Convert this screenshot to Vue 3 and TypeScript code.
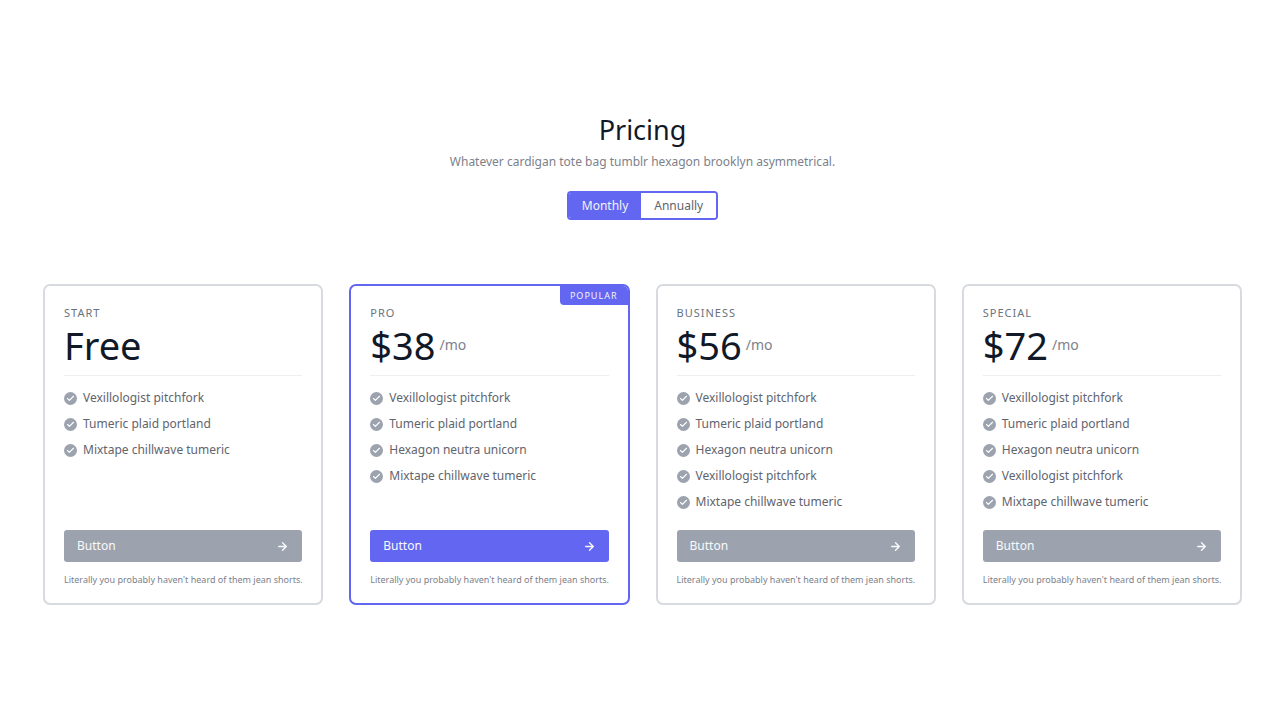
<script setup lang="ts">
import { ref } from 'vue'

interface Plan {
  name: string
  price: string
  period?: string
  popular?: boolean
  features: string[]
}

const cycle = ref<'Monthly' | 'Annually'>('Monthly')
const cycles = ['Monthly', 'Annually'] as const

const pitchfork = 'Vexillologist pitchfork'
const plaid = 'Tumeric plaid portland'
const hexagon = 'Hexagon neutra unicorn'
const mixtape = 'Mixtape chillwave tumeric'

const plans: Plan[] = [
  { name: 'START', price: 'Free', features: [pitchfork, plaid, mixtape] },
  { name: 'PRO', price: '$38', period: '/mo', popular: true, features: [pitchfork, plaid, hexagon, mixtape] },
  { name: 'BUSINESS', price: '$56', period: '/mo', features: [pitchfork, plaid, hexagon, pitchfork, mixtape] },
  { name: 'SPECIAL', price: '$72', period: '/mo', features: [pitchfork, plaid, hexagon, pitchfork, mixtape] },
]
</script>

<template>
  <section class="pricing">
    <header class="intro">
      <h1>Pricing</h1>
      <p>Whatever cardigan tote bag tumblr hexagon brooklyn asymmetrical.</p>
      <div class="toggle" role="group" aria-label="Billing cycle">
        <button
          v-for="item in cycles"
          :key="item"
          type="button"
          :class="{ active: cycle === item }"
          :aria-pressed="cycle === item"
          @click="cycle = item"
        >{{ item }}</button>
      </div>
    </header>

    <div class="plans">
      <article v-for="plan in plans" :key="plan.name" class="card" :class="{ popular: plan.popular }">
        <span v-if="plan.popular" class="badge">POPULAR</span>
        <h2>{{ plan.name }}</h2>
        <div class="price">
          <span class="amount">{{ plan.price }}</span>
          <span v-if="plan.period" class="period">{{ plan.period }}</span>
        </div>
        <ul>
          <li v-for="(feature, index) in plan.features" :key="index">
            <span class="check">
              <svg viewBox="0 0 24 24" fill="none" stroke="currentColor" stroke-width="3" stroke-linecap="round" stroke-linejoin="round" aria-hidden="true">
                <path d="M20 6L9 17l-5-5" />
              </svg>
            </span>
            {{ feature }}
          </li>
        </ul>
        <button type="button" class="choose">
          Button
          <svg viewBox="0 0 24 24" fill="none" stroke="currentColor" stroke-width="2.5" stroke-linecap="round" stroke-linejoin="round" aria-hidden="true">
            <path d="M5 12h14M12 5l7 7-7 7" />
          </svg>
        </button>
        <p class="note">Literally you probably haven't heard of them jean shorts.</p>
      </article>
    </div>
  </section>
</template>

<style>
body {
  margin: 0;
  background: #fff;
}
</style>

<style scoped>
.pricing {
  box-sizing: border-box;
  padding: 112px 38px 24px 43px;
  font-family: "Noto Sans", "Open Sans", sans-serif;
  font-size: 12px;
  line-height: 20px;
  color: #6b7280;
}

h1,
h2,
p,
ul {
  margin: 0;
  padding: 0;
  font-weight: 400;
}

button {
  border: 0;
  font: inherit;
  cursor: pointer;
}

.intro {
  display: flex;
  flex-direction: column;
  align-items: center;
  margin-bottom: 64px;
}

.intro h1 {
  margin-bottom: 4px;
  font-size: 27px;
  line-height: 36px;
  color: #111827;
}

.intro p {
  color: #7c818b;
}

.toggle {
  display: flex;
  margin-top: 19px;
  border: 2px solid #6366f1;
  border-radius: 4px;
  overflow: hidden;
}

.toggle button {
  padding: 3px 13px;
  line-height: 19px;
  background: #fff;
  color: #5f646d;
}

.toggle button.active {
  background: #6366f1;
  color: #f3f4f6;
}

.plans {
  display: grid;
  grid-template-columns: repeat(4, 1fr);
  gap: 26px;
}

.card {
  position: relative;
  display: flex;
  flex-direction: column;
  box-sizing: border-box;
  min-width: 0;
  padding: 19px 19px 16px;
  border: 2px solid #d7dade;
  border-radius: 7px;
  overflow: hidden;
}

.card.popular {
  border-color: #6366f1;
}

.badge {
  position: absolute;
  top: 0;
  right: 0;
  padding: 2px 10px 1px;
  border-bottom-left-radius: 4px;
  background: #6366f1;
  font-size: 9px;
  line-height: 16px;
  letter-spacing: 1px;
  color: #f3f4f6;
}

.card h2 {
  font-size: 11px;
  line-height: 15px;
  letter-spacing: 1px;
}

.price {
  display: flex;
  align-items: center;
  gap: 4px;
  margin-bottom: 12px;
  padding-bottom: 5px;
  border-bottom: 1px solid #eceef0;
}

.amount {
  font-size: 38px;
  line-height: 50px;
  color: #111827;
}

.period {
  font-size: 14px;
  color: #7c818b;
}

ul {
  display: grid;
  gap: 6px;
  margin-bottom: 18px;
  list-style: none;
}

li {
  display: flex;
  align-items: center;
  gap: 6px;
  color: #5f646d;
}

.check {
  display: flex;
  align-items: center;
  justify-content: center;
  width: 13px;
  height: 13px;
  border-radius: 50%;
  background: #9ca3af;
  color: #fff;
}

.check svg {
  width: 9px;
  height: 9px;
}

.choose {
  display: flex;
  align-items: center;
  justify-content: space-between;
  margin-top: auto;
  padding: 6px 13px;
  border-radius: 3px;
  background: #9ca3af;
  color: #f9fafb;
}

.choose svg {
  width: 13px;
  height: 13px;
}

.popular .choose {
  background: #6366f1;
}

.note {
  margin-top: 10px;
  font-size: 9px;
  line-height: 15px;
  white-space: nowrap;
  color: #7c818b;
}
</style>
